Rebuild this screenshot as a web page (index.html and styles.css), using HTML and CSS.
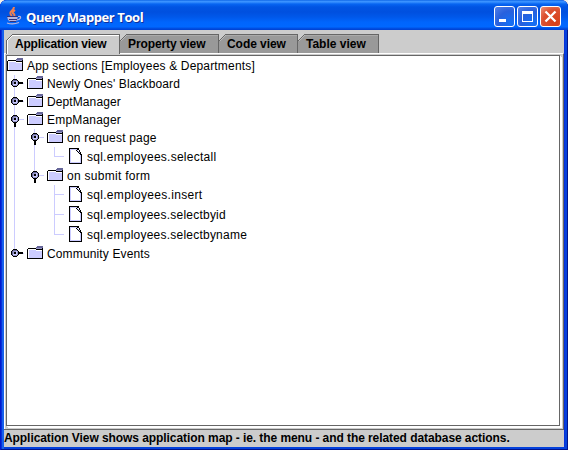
FILE: index.html
```
<!DOCTYPE html>
<html lang="en">
<head>
<meta charset="utf-8">
<title>Query Mapper Tool</title>
<link rel="stylesheet" href="styles.css">
</head>
<body>
<svg width="0" height="0" class="defs" shape-rendering="crispEdges">
  <symbol id="folder" viewBox="0 1 16 18">
    <path fill="#ccccff" d="M2 6h13v8H2z"/>
    <path fill="#666699" d="M10 2h6v1h-6zM9 3h7v1H9z"/>
    <path fill="#9999cc" d="M9 4h6v1H9z"/>
    <path fill="#000" d="M0 5h1v10H0zM1 4h8v1H1zM9 5h6v1H9zM15 4h1v11h-1zM0 14h16v1H0z"/>
    <path fill="#fff" d="M1 5h1v9H1zM1 5h8v1H1zM9 6h6v1H9z"/>
  </symbol>
  <symbol id="file" viewBox="0 1 16 20">
    <path fill="#fff" d="M4 4h9v12H4z"/>
    <path fill="#ccccff" d="M3 3h1v14H3zM3 3h7v1H3zM13 9h1v8h-1zM3 16h11v1H3zM10 4h1v1h-1zM11 5h1v1h-1zM12 6h1v1h-1z"/>
    <path fill="#000" d="M2 2h1v16H2zM2 2h10v1H2zM2 17h13v1H2zM14 8h1v10h-1zM9 4h1v1H9zM10 5h1v1h-1zM11 6h1v1h-1zM12 7h1v1h-1zM13 8h1v1h-1zM10 3h2v1h-2zM12 4h1v2h-1zM13 6h1v2h-1z"/>
  </symbol>
  <symbol id="knob" viewBox="0 0 20 18">
    <path fill="#9999cc" d="M5 5h6v6H5z"/>
    <path fill="#666699" d="M5 6h1v4H5zM6 5h4v1H6z"/>
    <path fill="#ccccff" d="M9 6h1v4H9zM6 9h3v1H6z"/>
    <path fill="#000" d="M4 6h1v4H4zM5 5h1v1H5zM6 4h4v1H6zM10 5h1v1h-1zM11 6h1v4h-1zM10 10h1v1h-1zM6 11h4v1H6zM5 10h1v1H5zM7 7h2v2H7z"/>
  </symbol>
  <symbol id="closed" viewBox="0 0 20 18"><path fill="#ccccff" d="M7 0h1v18H7zM12 8h5v1h-5z"/><use href="#knob" width="20" height="18"/><path d="M12 7h4v2h-4z"/></symbol>
  <symbol id="closed-last" viewBox="0 0 20 18"><path fill="#ccccff" d="M7 0h1v8H7zM12 8h5v1h-5z"/><use href="#knob" width="20" height="18"/><path d="M12 7h4v2h-4z"/></symbol>
  <symbol id="open" viewBox="0 0 20 18"><path fill="#ccccff" d="M7 0h1v18H7zM12 8h5v1h-5z"/><use href="#knob" width="20" height="18"/><path d="M7 12h2v4H7z"/></symbol>
  <symbol id="open-last" viewBox="0 0 20 18"><path fill="#ccccff" d="M7 0h1v8H7zM12 8h5v1h-5z"/><use href="#knob" width="20" height="18"/><path d="M7 12h2v4H7z"/></symbol>
  <symbol id="corner" viewBox="0 0 7 7"><path fill="#ccc" d="M0 0h6v1H5v1H4v1H3v1H2v1H1v1H0z"/><path fill="#666" d="M6 0h1v1H6zM5 1h1v1H5zM4 2h1v1H4zM3 3h1v1H3zM2 4h1v1H2zM1 5h1v1H1zM0 6h1v1H0z"/><path fill="#fff" d="M6 1h1v1H6zM5 2h1v1H5zM4 3h1v1H4zM3 4h1v1H3zM2 5h1v1H2zM1 6h1v1H1z"/></symbol>
  <symbol id="corner-back" viewBox="0 0 7 7"><path fill="#ccc" d="M0 0h6v1H5v1H4v1H3v1H2v1H1v1H0z"/><path fill="#666" d="M6 0h1v1H6zM5 1h1v1H5zM4 2h1v1H4zM3 3h1v1H3zM2 4h1v1H2zM1 5h1v1H1zM0 6h1v1H0z"/><path fill="#bbb" d="M6 1h1v1H6zM5 2h1v1H5zM4 3h1v1H4zM3 4h1v1H3zM2 5h1v1H2zM1 6h1v1H1z"/></symbol>
</svg>
<div class="window">
  <header class="titlebar">
    <svg class="java" width="16" height="18" viewBox="0 0 16 18">
      <path fill="none" stroke="#f08050" stroke-width="2" d="M8 0Q8 2 5.500 4Q3 6 6 9M9 3Q5 6 8 7Q9 8 8 10"/>
      <path fill="#b9b5dc" d="M1 9h11l-1 4-2 2H5l-3-2z"/>
      <path fill="none" stroke="#31317b" d="M1 9.500h11M3 12.500h8M4 14.500h6"/>
      <path fill="none" stroke="#b9b5dc" stroke-width="1.200" d="M12 9.500q3-.5 2.500 1.500q-.5 1.500-3.500 2M1 16q6 2 12-.5"/>
    </svg>
    <h1>Query Mapper Tool</h1>
    <div class="controls">
      <span class="btn"><svg width="21" height="21"><path fill="#fff" d="M5 13h7v3H5z"/></svg></span>
      <span class="btn"><svg width="21" height="21"><path fill="#fff" fill-rule="evenodd" d="M5 5h11v11H5zM6 8h9v7H6z"/></svg></span>
      <span class="btn close"><svg width="21" height="21"><path stroke="#fff" stroke-width="2.300" d="M5.500 5.500l10 10M15.500 5.500l-10 10"/></svg></span>
    </div>
  </header>
  <main class="client">
    <nav class="tabs">
      <div class="tab active t1"><svg class="corner"><use href="#corner"/></svg><span>Application view</span></div>
      <div class="tab t2"><svg class="corner"><use href="#corner-back"/></svg><span>Property view</span></div>
      <div class="tab t3"><svg class="corner"><use href="#corner-back"/></svg><span>Code view</span></div>
      <div class="tab t4"><svg class="corner"><use href="#corner-back"/></svg><span>Table view</span></div>
    </nav>
    <section class="pane"><div class="tree">
      <div class="row"><svg class="icon"><use href="#folder"/></svg><span class="r0">App sections [Employees &amp; Departments]</span></div>
      <div class="row"><svg class="handle"><use href="#closed"/></svg><svg class="icon"><use href="#folder"/></svg><span class="r1">Newly Ones' Blackboard</span></div>
      <div class="row"><svg class="handle"><use href="#closed"/></svg><svg class="icon"><use href="#folder"/></svg><span class="r2">DeptManager</span></div>
      <div class="row"><svg class="handle"><use href="#open"/></svg><svg class="icon"><use href="#folder"/></svg><span class="r3">EmpManager</span></div>
      <div class="row"><i class="guide"></i><svg class="handle"><use href="#open"/></svg><svg class="icon"><use href="#folder"/></svg><span class="r4">on request page</span></div>
      <div class="row leaf"><i class="guide"></i><i class="guide"></i><i class="guide elbow last"></i><svg class="icon"><use href="#file"/></svg><span class="r5">sql.employees.selectall</span></div>
      <div class="row"><i class="guide"></i><svg class="handle"><use href="#open-last"/></svg><svg class="icon"><use href="#folder"/></svg><span class="r6">on submit form</span></div>
      <div class="row leaf"><i class="guide"></i><i class="gap"></i><i class="guide elbow"></i><svg class="icon"><use href="#file"/></svg><span class="r7">sql.employees.insert</span></div>
      <div class="row leaf"><i class="guide"></i><i class="gap"></i><i class="guide elbow"></i><svg class="icon"><use href="#file"/></svg><span class="r8">sql.employees.selectbyid</span></div>
      <div class="row leaf"><i class="guide"></i><i class="gap"></i><i class="guide elbow last"></i><svg class="icon"><use href="#file"/></svg><span class="r9">sql.employees.selectbyname</span></div>
      <div class="row"><svg class="handle"><use href="#closed-last"/></svg><svg class="icon"><use href="#folder"/></svg><span class="r10">Community Events</span></div>
    </div></section>
    <footer class="status"><span>Application View shows application map - ie. the menu - and the related database actions.</span></footer>
  </main>
</div>
</body>
</html>
```
FILE: styles.css
```
* { box-sizing: border-box; }
body { margin: 0; background: #f4f2e8; font: 12px "Liberation Sans", Arial, sans-serif; color: #000; overflow: hidden; }
.defs { position: absolute; }
svg { display: block; flex: none; shape-rendering: crispEdges; }
.window {
  width: 568px; height: 450px; display: flex; flex-direction: column;
  padding: 0 4px 4px; border-radius: 7px 7px 0 0;
  background: #0831d9;
  box-shadow: inset 1px 0 #0019cf, inset -1px -1px #00138c, inset 2px 0 #0831d9, inset 4px 0 #1660ec, inset -3px -3px #0441dc;
}
.titlebar {
  height: 30px; margin: 0 -4px; padding: 0 7px 0 6px; display: flex; align-items: flex-start; flex: none;
  border-radius: 7px 7px 0 0;
  background: linear-gradient(#0058e0 0, #3c94ff 1px, #3890ff 2px, #0765f2 4px, #0054e3 7px, #0050df 12px, #0058ea 17px, #0065fc 22px, #0068ff 27px, #0052e6 28px, #003fd0 30px);
}
.java { margin-top: 7px; shape-rendering: auto; }
h1 { margin: 8px 0 0 4px; font: bold 13px/18px "Open Sans", sans-serif; color: #fff; text-shadow: 1px 1px #10309a; white-space: nowrap; letter-spacing: -.42px; }
.controls { display: flex; gap: 2px; margin: 6px 0 0 auto; }
.btn { width: 21px; height: 21px; border: 1px solid #fff; border-radius: 3px; background: radial-gradient(circle at 80% 85%, #1470f5, #2860dd 55%, #5381e8); }
.btn svg { margin: -1px; shape-rendering: auto; }
.close { background: radial-gradient(circle at 75% 80%, #d84018, #dc5030 60%, #ed9078); }
.client { flex: 1; display: flex; flex-direction: column; background: #ccc; }
.tabs { display: flex; height: 23px; padding: 4px 0 0 2px; }
.tab { position: relative; height: 19px; background: #999; border-top: 1px solid #666; border-right: 1px solid #666; font-weight: bold; line-height: 18px; white-space: nowrap; box-shadow: inset 0 1px #aaa; }
.tab span { display: block; padding-left: 8px; }
.active { background: #ccc; height: 20px; border-left: 1px solid #666; box-shadow: inset 1px 1px #fff; }
.corner { position: absolute; left: 0; top: -1px; width: 7px; height: 7px; }
.active .corner { left: -1px; }
.t1 { width: 114px; letter-spacing: -.2px; }
.t2 { width: 99px; letter-spacing: -.1px; }
.t3 { width: 79px; letter-spacing: -.05px; }
.t4 { width: 81px; }
.pane { flex: none; height: 376px; padding: 1px 3px 3px 1px; border: 1px solid #fff; border-right-color: #666; border-bottom: 0; }
.tree { height: 371px; background: #fff; border: 1px solid #666; padding-top: 1px; box-shadow: 1px 1px #fff, 2px 2px #fff; }
.row { display: flex; height: 18px; line-height: 18px; white-space: nowrap; }
.leaf { height: 20px; line-height: 20px; }
.row span { margin-left: 4px; }
.r0 { letter-spacing: .17px; }
.r1 { letter-spacing: .12px; }
.r2 { letter-spacing: .1px; }
.r3 { letter-spacing: .2px; }
.r4 { letter-spacing: .2px; }
.r5 { letter-spacing: .26px; }
.r6 { letter-spacing: .28px; }
.r7 { letter-spacing: .3px; }
.r8 { letter-spacing: .23px; }
.r9 { letter-spacing: .23px; }
.r10 { letter-spacing: .14px; }
.icon { width: 16px; height: 18px; }
.leaf .icon { height: 20px; }
.handle { width: 20px; height: 18px; }
.guide, .gap { flex: none; width: 20px; }
.guide { background: linear-gradient(#ccccff, #ccccff) 7px 0 / 1px 100% no-repeat; }
.elbow { background: linear-gradient(#ccccff, #ccccff) 7px 0 / 1px 100% no-repeat, linear-gradient(#ccccff, #ccccff) 7px 9px / 10px 1px no-repeat; }
.last { background-size: 1px 9px, 10px 1px; }
.status { flex: 1; border-top: 1px solid #666; font-weight: bold; line-height: 17px; white-space: nowrap; letter-spacing: -.07px; }
```
